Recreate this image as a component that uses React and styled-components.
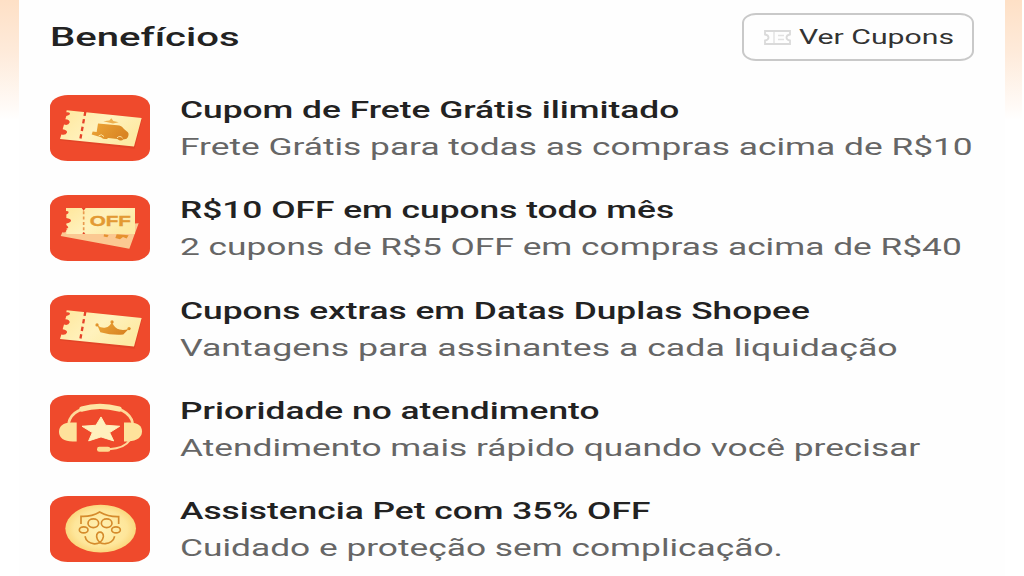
import React from 'react'
import styled, { createGlobalStyle } from 'styled-components'

const GlobalStyle = createGlobalStyle`
  body {
    margin: 0;
    overflow: hidden;
    background: #fff;
    font-family: Roboto, 'Liberation Sans', sans-serif;
  }
`

const Page = styled.div`
  display: grid;
  grid-template-columns: 19px 1fr 17px;
  width: 1022px;
  height: 576px;
  box-sizing: border-box;
`

const Edge = styled.div`
  height: 120px;
  background: linear-gradient(#fee0c6, #feebdb 45%, #fffaf6 88%, #fff);
`

const Card = styled.main`
  padding: 13px 31px 0;
  background: #fefefe;
`

const Header = styled.header`
  display: flex;
  justify-content: space-between;
  height: 48px;
  margin-bottom: 33.5px;
`

const Wide = styled.span`
  display: block;
  width: max-content;
  white-space: nowrap;
  transform: scaleX(${({ $stretch }) => $stretch || 1.535});
  transform-origin: left center;
`

const Heading = styled.h1`
  margin: 0;
  font-size: 25.6px;
  font-weight: 500;
  line-height: 48px;
  color: #222;
`

const Button = styled.button`
  display: flex;
  align-items: center;
  gap: 8px;
  width: 232px;
  height: 48px;
  box-sizing: border-box;
  padding: 0 0 0 20px;
  border: 2px solid #c9c9c9;
  border-radius: 14px / 10px;
  background: #fefefe;
  font-family: inherit;
  font-size: 20px;
  line-height: 24px;
  color: #333;
`

const List = styled.ul`
  display: flex;
  flex-direction: column;
  gap: 33.8px;
  margin: 0;
  padding: 0;
  list-style: none;
`

const Item = styled.li`
  display: flex;
  gap: 29.5px;
  height: 66.5px;
`

const Badge = styled.svg`
  flex: none;
  width: 100px;
  height: 66.5px;
  border-radius: 18px / 12px;
  background: #ef4a2c;
`

const ItemTitle = styled.h2`
  margin: 1.5px 0 0;
  font-size: 23px;
  font-weight: 500;
  line-height: 30px;
  color: #222;
`

const ItemText = styled.p`
  margin: 7px 0 0;
  font-size: 23px;
  line-height: 30px;
  color: #666;
`

const TicketShape = () => (
  <>
    <path
      fill="#c93a1c"
      opacity="0.35"
      d="M58 164 L282 190 L304 102 L300 98 L280 183 L60 156 Z"
    />
    <path
      fill="url(#cream)"
      d="M78 74 L303 97 L280 183 L58 160 L62 147 Q76 150 79 141 Q80 133 66 131 L70 117 Q83 121 87 111 Q88 102 74 101 L77 91 Q87 90 88 84 Q87 79 77 80 Z"
    />
    <path stroke="#e5432a" strokeWidth="7" strokeDasharray="13 10" d="M134 78 L118 166" />
  </>
)

const Defs = () => (
  <defs>
    <linearGradient id="cream" x1="0" y1="0" x2="1" y2="0.5">
      <stop offset="0" stopColor="#ffe79c" />
      <stop offset="0.55" stopColor="#fff2bd" />
      <stop offset="1" stopColor="#fdeaa4" />
    </linearGradient>
    <linearGradient id="amber" x1="0" y1="0" x2="1" y2="0.4">
      <stop offset="0" stopColor="#eda637" />
      <stop offset="1" stopColor="#d98523" />
    </linearGradient>
    <radialGradient id="coin">
      <stop offset="0" stopColor="#fff2b4" />
      <stop offset="0.75" stopColor="#fee69a" />
      <stop offset="1" stopColor="#fbd77d" />
    </radialGradient>
  </defs>
)

const ShippingIcon = () => (
  <Badge viewBox="28 28 300 200" preserveAspectRatio="none">
    <Defs />
    <TicketShape />
    <path
      fill="url(#amber)"
      d="M172 114 L230 119 Q243 120 250 130 L258 137 Q267 142 262 154 Q258 163 249 161 Q240 169 230 160 L203 157 Q192 165 181 155 L153 147 L156 138 L168 139 Z"
    />
    <path fill="none" stroke="#fff0b5" strokeWidth="2.5" d="M174 151 q8 -8 16 2 M229 157 q9 -9 17 1" />
    <path fill="#eba53b" d="M188 107 L206 105 L212 98 L218 106 L234 110 L217 114 Z" opacity="0.85" />
  </Badge>
)

const OffIcon = () => (
  <Badge viewBox="28 28 300 200" preserveAspectRatio="none">
    <path fill="#fbc992" d="M78 127 L294 113 L266 190 L60 151 L65 140 Q80 143 78 127 Z" />
    <path fill="#e6912f" d="M228 146 L264 149 L258 159 L247 154 L238 161 L224 157 Z M190 146 l14 2 -4 7 -11 -2 z" />
    <path
      fill="url(#cream)"
      d="M76 67 H283 V145 H77 V135 Q83 131 83 127 Q83 122 77 118 V114 Q91 111 91 105 Q91 99 77 97 V87 Q84 84 84 79 Q84 76 76 76 Z"
    />
    <path stroke="#e99a4f" strokeWidth="5" strokeDasharray="9 7" d="M129 77 V142" />
    <path fill="#e5432a" d="M123 67 h12 l-6 8 z M125 145 h9 l-5 -6 z" />
    <text
      x="147"
      y="122"
      fill="#e39a33"
      stroke="#e39a33"
      strokeWidth="1"
      fontFamily="Liberation Sans, sans-serif"
      fontSize="43"
      fontWeight="700"
      textLength="124"
      lengthAdjust="spacingAndGlyphs"
    >
      OFF
    </text>
  </Badge>
)

const CrownIcon = () => (
  <Badge viewBox="28 28 300 200" preserveAspectRatio="none">
    <TicketShape />
    <g fill="url(#amber)">
      <path d="M170 119 Q183 129 195 126 Q207 123 214 109 Q222 129 237 132 Q250 135 264 130 L248 147 Q215 150 179 140 Z" />
      <circle cx="169" cy="118" r="5" />
      <circle cx="214" cy="109" r="5" />
      <circle cx="265" cy="129" r="5" />
    </g>
  </Badge>
)

const SupportIcon = () => (
  <Badge viewBox="28 28 300 200" preserveAspectRatio="none">
    <path fill="none" stroke="#ffd99a" strokeWidth="8" d="M84 112 C91 79 126 63 179 62 C235 62 269 81 276 112" />
    <path
      fill="none"
      stroke="#fee5a3"
      strokeWidth="16"
      strokeLinecap="round"
      d="M124 70 Q176 54 235 70"
    />
    <path fill="#fee29b" d="M108 111 H91 Q55 113 55 139 Q56 166 96 168 H108 Z" />
    <path fill="#fee29b" d="M250 111 H268 Q304 113 304 138 Q303 165 263 168 H250 Z" />
    <path fill="none" stroke="#ffd99a" strokeWidth="6" d="M267 164 C256 182 235 189 205 191" />
    <rect x="169" y="184" width="40" height="15" rx="7" fill="#ffdb91" />
    <path
      fill="#fff0bd"
      stroke="#fff0bd"
      strokeWidth="3"
      strokeLinejoin="round"
      d="M181 94 L195 119 L237 122 L207 141 L219 166 L181 154 L144 166 L155 141 L124 122 L166 119 Z"
    />
  </Badge>
)

const PetIcon = () => (
  <Badge viewBox="28 28 300 200" preserveAspectRatio="none">
    <ellipse cx="180" cy="126" rx="106" ry="72" fill="url(#coin)" />
    <g fill="none" stroke="#d58b2c" strokeWidth="5">
      <path d="M121 112 V89 Q151 91 177 76 Q203 91 234 90 V112" />
      <ellipse cx="158" cy="110" rx="16" ry="13" />
      <ellipse cx="198" cy="110" rx="16" ry="13" />
      <ellipse cx="129" cy="130" rx="13" ry="9" />
      <ellipse cx="226" cy="130" rx="13" ry="9" />
      <path d="M133 149 C138 177 183 181 188 151 C190 132 166 132 168 151 C172 181 216 176 222 149" />
    </g>
  </Badge>
)

const CouponIcon = () => (
  <svg width="27" height="15" viewBox="0 0 27 15" fill="none">
    <path
      stroke="#dadada"
      strokeWidth="1.8"
      d="M1 1 H26 V4.5 Q22.5 5 22.5 7.5 Q22.5 10 26 10.5 V14 H1 V10.5 Q4.5 10 4.5 7.5 Q4.5 5 1 4.5 Z"
    />
    <path stroke="#e2e2e2" strokeWidth="1.4" d="M10 2 V13 M14 5.5 H20 M14 9.5 H20" />
  </svg>
)

const benefits = [
  {
    icon: ShippingIcon,
    title: 'Cupom de Frete Grátis ilimitado',
    text: 'Frete Grátis para todas as compras acima de R$10'
  },
  {
    icon: OffIcon,
    title: 'R$10 OFF em cupons todo mês',
    text: '2 cupons de R$5 OFF em compras acima de R$40'
  },
  {
    icon: CrownIcon,
    title: 'Cupons extras em Datas Duplas Shopee',
    text: 'Vantagens para assinantes a cada liquidação',
    stretch: 1.552
  },
  {
    icon: SupportIcon,
    title: 'Prioridade no atendimento',
    text: 'Atendimento mais rápido quando você precisar'
  },
  {
    icon: PetIcon,
    title: 'Assistencia Pet com 35% OFF',
    text: 'Cuidado e proteção sem complicação.'
  }
]

const App = () => (
  <>
    <GlobalStyle />
    <Page>
      <Edge />
      <Card>
        <Header>
          <Heading>
            <Wide $stretch={1.565}>Benefícios</Wide>
          </Heading>
          <Button>
            <CouponIcon />
            <Wide $stretch={1.51}>Ver Cupons</Wide>
          </Button>
        </Header>
        <List>
          {benefits.map(({ icon: Icon, title, text, stretch }) => (
            <Item key={title}>
              <Icon />
              <div>
                <ItemTitle>
                  <Wide>{title}</Wide>
                </ItemTitle>
                <ItemText>
                  <Wide $stretch={stretch}>{text}</Wide>
                </ItemText>
              </div>
            </Item>
          ))}
        </List>
      </Card>
      <Edge />
    </Page>
  </>
)

export default App
